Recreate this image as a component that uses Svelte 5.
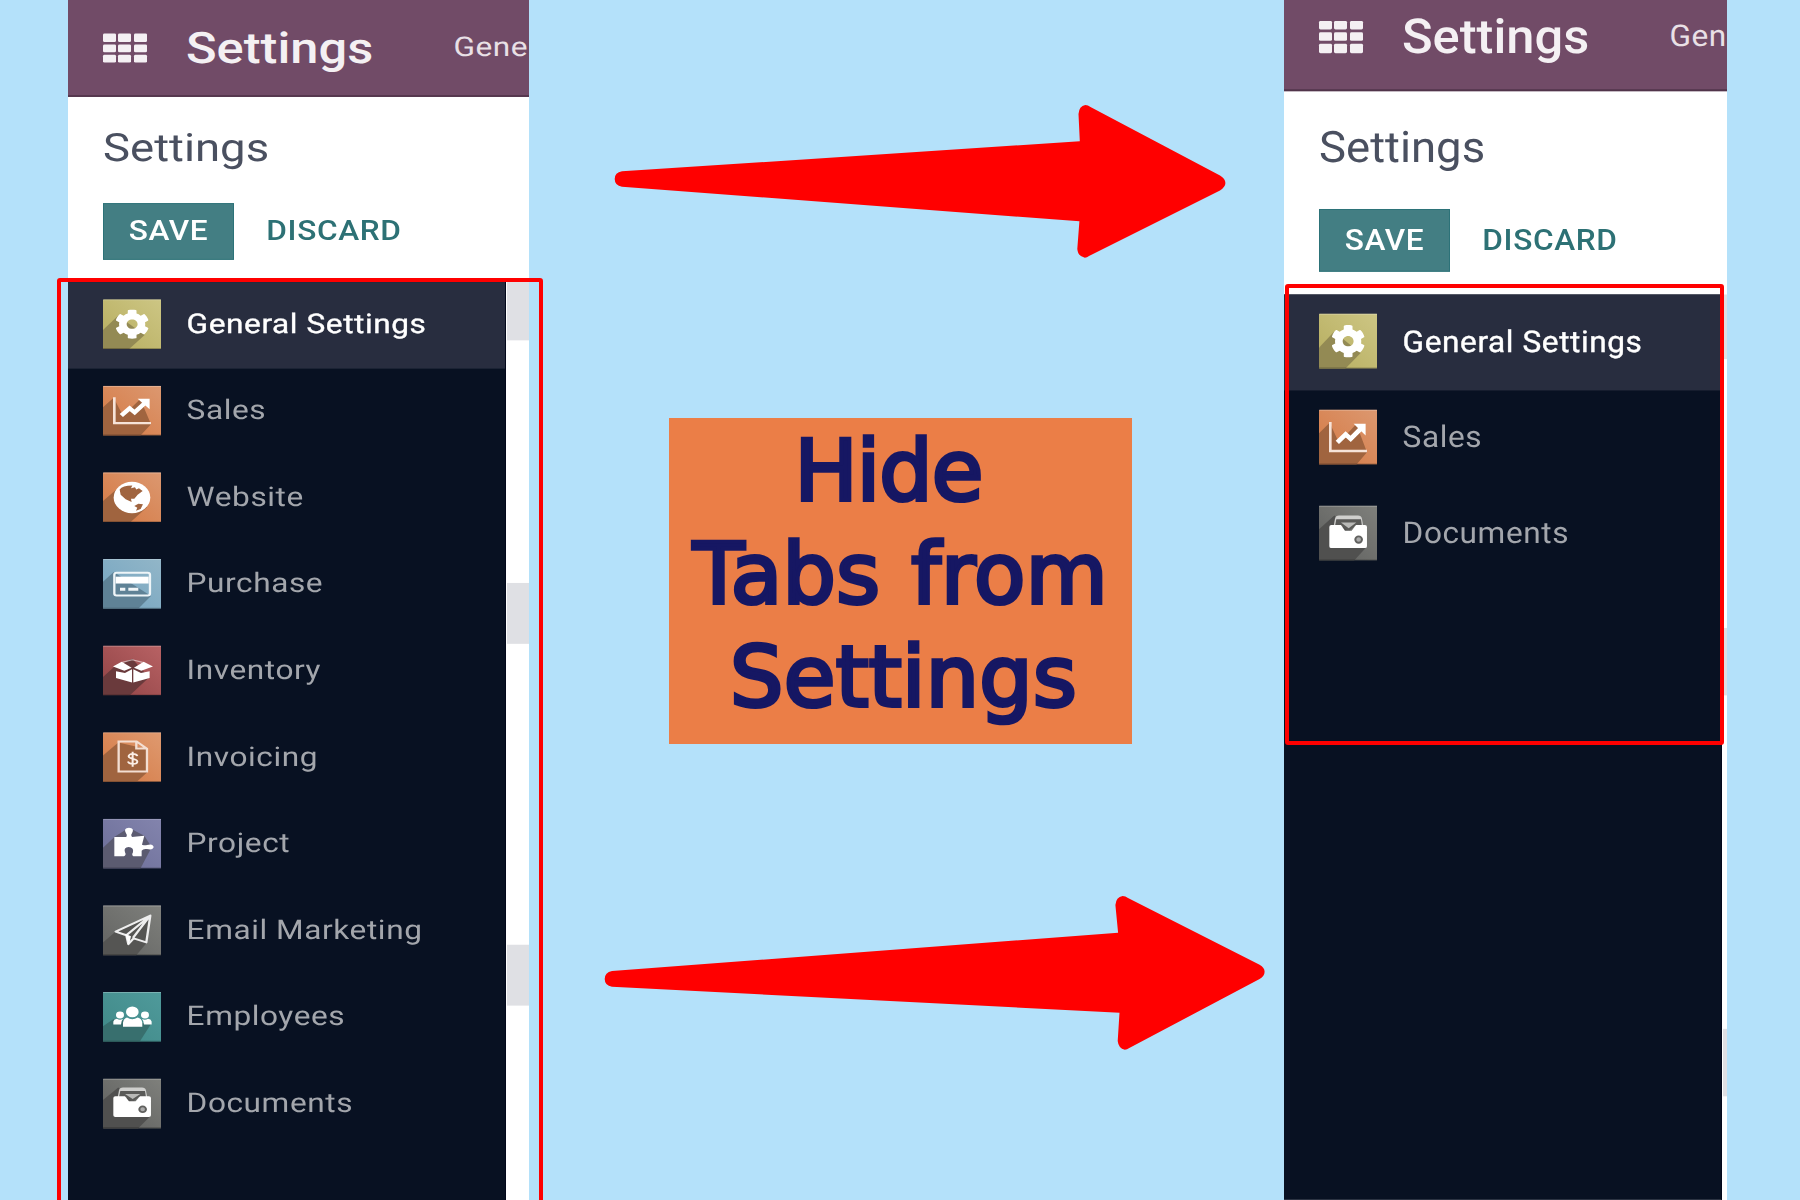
<script lang="ts">
  type Tab = { label: string; icon: string; active?: boolean };

  const before: Tab[] = [
    { label: 'General Settings', icon: 'gear', active: true },
    { label: 'Sales', icon: 'chart' },
    { label: 'Website', icon: 'globe' },
    { label: 'Purchase', icon: 'card' },
    { label: 'Inventory', icon: 'box' },
    { label: 'Invoicing', icon: 'invoice' },
    { label: 'Project', icon: 'puzzle' },
    { label: 'Email Marketing', icon: 'plane' },
    { label: 'Employees', icon: 'people' },
    { label: 'Documents', icon: 'drawer' },
  ];
  const after: Tab[] = [before[0], before[1], before[9]];

  const panels = [
    { side: 'left', tabs: before, entry: 'Gene' },
    { side: 'right', tabs: after, entry: 'Gen' },
  ];

  // tile gradient start, gradient end, long-shadow colour, shadow outline
  const tiles: Record<string, string[]> = {
    gear: ['#bbb266', '#cdc684', '#938a54', '0,108 45,58 125,125 78,175 0,175'],
    chart: ['#d67f4c', '#dc9870', '#a0643f', '0,75 32,42 60,105 112,46 144,135 112,175 0,175'],
    globe: ['#d67f4c', '#dc9870', '#a0643f', '0,100 40,60 132,122 82,175 0,175'],
    card: ['#7aa8c2', '#92b6c8', '#5f8296', '0,80 32,46 144,130 105,175 0,175'],
    box: ['#98494b', '#b86264', '#6a3a3c', '0,110 34,74 88,46 138,112 80,175 0,175'],
    invoice: ['#d67f4c', '#df9a70', '#a0643f', '0,82 46,36 134,60 134,140 100,175 0,175'],
    puzzle: ['#70729c', '#8384ad', '#5b5b70', '0,102 36,62 78,32 124,60 146,100 112,175 0,175'],
    plane: ['#686967', '#7f807c', '#555553', '0,130 38,92 142,36 132,130 100,175 0,175'],
    people: ['#438c8b', '#4f9a9b', '#386f6e', '0,120 32,95 144,112 110,175 0,175'],
    drawer: ['#646563', '#7f807c', '#50504f', '0,75 46,32 144,130 105,175 0,175'],
  };
</script>

<main class="stage">
  {#each panels as panel}
    <section class="panel {panel.side}">
      <div class="sheet">
        <header class="navbar">
          <div class="apps">{#each Array(9) as _}<i></i>{/each}</div>
          <strong class="brand">Settings</strong>
          <span class="entry">{panel.entry}</span>
        </header>
        <div class="control">
          <h1>Settings</h1>
          <div class="actions">
            <button class="save">SAVE</button>
            <button class="discard">DISCARD</button>
          </div>
        </div>
        <div class="body">
          <nav>
            {#each panel.tabs as tab}
              {@const t = tiles[tab.icon]}
              {@const gid = `${panel.side}-${tab.icon}`}
              <div class="tab" class:active={tab.active}>
                <svg class="tile" viewBox="0 0 175 175" fill="#fff">
                  <defs>
                    <linearGradient id={gid} x1="0" y1="1" x2="1" y2="0">
                      <stop offset="0.2" stop-color={t[0]} /><stop offset="1" stop-color={t[1]} />
                    </linearGradient>
                  </defs>
                  <rect width="175" height="175" rx="3" fill="url(#{gid})" />
                  <polygon points={t[3]} fill={t[2]} />
                  <path d="M0 2H175" stroke="#fff" stroke-opacity=".25" stroke-width="4" />
                  <path d="M0 173H175" stroke="#000" stroke-opacity=".25" stroke-width="4" />
                  {#if tab.icon === 'gear'}
                    <path transform="translate(35 35) scale(.205)" d="M487.4 315.7l-42.6-24.6c4.3-23.2 4.3-47 0-70.2l42.6-24.6c4.9-2.8 7.1-8.6 5.5-14-11.1-35.6-30-67.8-54.7-94.6-3.8-4.1-10-5.1-14.8-2.3L380.8 110c-17.9-15.4-38.5-27.3-60.8-35.1V25.8c0-5.6-3.9-10.5-9.4-11.7-36.7-8.2-74.3-7.8-109.2 0-5.5 1.2-9.4 6.1-9.4 11.7V75c-22.2 7.9-42.8 19.8-60.8 35.1L88.7 85.5c-4.9-2.8-11-1.9-14.8 2.3-24.7 26.7-43.6 58.9-54.7 94.6-1.7 5.4.6 11.2 5.5 14L67.3 221c-4.3 23.2-4.3 47 0 70.2l-42.6 24.6c-4.9 2.8-7.1 8.6-5.5 14 11.1 35.6 30 67.8 54.7 94.6 3.8 4.1 10 5.1 14.8 2.3l42.6-24.6c17.9 15.4 38.5 27.3 60.8 35.1v49.2c0 5.6 3.9 10.5 9.4 11.7 36.7 8.2 74.3 7.8 109.2 0 5.5-1.2 9.4-6.1 9.4-11.7v-49.2c22.2-7.9 42.8-19.8 60.8-35.1l42.6 24.6c4.9 2.8 11 1.9 14.8-2.3 24.7-26.7 43.6-58.9 54.7-94.6 1.5-5.5-.7-11.3-5.6-14.1zM256 336c-44.1 0-80-35.9-80-80s35.9-80 80-80 80 35.9 80 80-35.9 80-80 80z" />
                  {:else if tab.icon === 'chart'}
                    <path d="M34 40V131H144" fill="none" stroke="#f6e3d8" stroke-width="8" />
                    <path d="M55 104L80 79L95 93L127 59" fill="none" stroke="#fff" stroke-width="14" />
                    <path d="M104 45H140V82Z" />
                  {:else if tab.icon === 'globe'}
                    <circle cx="87" cy="88" r="55" />
                    <g fill={t[2]}>
                      <path d="M50 60Q58 46 88 46L84 56L96 52L100 60L108 56L119 65L104 78L94 92L84 92L86 104L68 94L53 78Z" />
                      <path d="M94 118L106 110L120 112L113 128L99 134L103 124Z" />
                    </g>
                  {:else if tab.icon === 'card'}
                    <rect x="34" y="48" width="107" height="80" rx="7" fill="none" stroke="#eef5f8" stroke-width="7" />
                    <rect x="38" y="62" width="99" height="24" />
                    <path d="M51 106H67M76 106H106" stroke="#f1f6f8" stroke-width="10" />
                  {:else if tab.icon === 'box'}
                    <path d="M58 59L88 50L119 59" fill="none" stroke="#fff" stroke-opacity=".55" stroke-width="4" />
                    <path d="M30 73L56 57L86 78L64 88ZM150 73L122 57L93 78L115 88Z" />
                    <path d="M39 90L66 96L87 83V129L39 114ZM140 90L114 96L91 83V129L140 114Z" />
                  {:else if tab.icon === 'invoice'}
                    <path d="M47 33H101L132 58V138H47ZM100 33V57H132" fill="none" stroke="#f3ded2" stroke-width="7" />
                    <path d="M103 84C100 73 76 74 77 85C78 96 103 91 103 103C103 114 78 114 75 103M89 69V121" fill="none" stroke="#fbeee6" stroke-width="6" />
                  {:else if tab.icon === 'puzzle'}
                    <path d="M34 64H70Q74 57 69 51Q60 33 78 32Q96 33 87 51Q82 57 87 64L124 60L117 91Q126 94 132 92Q150 86 152 99Q150 111 132 106Q120 104 116 112V131H91Q85 126 90 117Q93 101 77 99Q61 101 66 117Q71 126 63 131H34Z" />
                  {:else if tab.icon === 'plane'}
                    <path d="M142 36L38 92L70 105L76 136L92 116L130 130ZM70 105L140 38L90 114" fill="none" stroke="#eee" stroke-width="7" stroke-linejoin="round" />
                    <path d="M66 100L84 108L78 138Z" />
                  {:else if tab.icon === 'people'}
                    <circle cx="88" cy="70" r="19" /><circle cx="51" cy="81" r="12" /><circle cx="126" cy="81" r="12" />
                    <path d="M60 122V108Q62 94 72 90Q88 101 104 90Q116 94 118 108V122ZM31 114V104Q33 95 42 94Q50 100 60 95Q54 102 54 114ZM146 114V104Q144 95 135 94Q127 100 117 95Q123 102 123 114Z" />
                  {:else}
                    <path d="M44 66L48 42Q50 32 60 32H117Q127 32 129 42L133 66Z" fill="#cfcfcd" />
                    <path d="M52 44H126L129 66H107L88 82L70 66H48Z" fill="#5a5a58" />
                    <path d="M66 54H112L89 72Z" fill="#b9b9b7" />
                    <path d="M31 68Q31 62 37 62H66L78 80H98L111 62H138Q144 62 144 68V129Q144 135 138 135H37Q31 135 31 129Z" />
                    <circle cx="119" cy="108" r="10" fill="#aaa" stroke="#60605e" stroke-width="6" />
                  {/if}
                </svg>
                <span>{tab.label}</span>
              </div>
            {/each}
          </nav>
          <div class="content"><b></b><b></b><b></b></div>
        </div>
      </div>
    </section>
  {/each}

  <div class="caption">
    <p class="hide">Hide</p>
    <p class="tabs">Tabs from</p>
    <p class="settings">Settings</p>
  </div>

  <svg class="marks" viewBox="0 0 1800 1200">
    <g fill="#f00">
      <path d="M622 171.3L1079.8 141.3L1078.5 114Q1079 106 1085.3 105Q1088 105 1090.5 107L1220 175.6Q1225.4 179 1225.4 183Q1225.4 187 1220 190.4L1089 256Q1087 257.7 1084.8 257.7Q1078 256.5 1077.3 249L1079.4 221.3L622 186.7Q614.7 185.5 614.7 179Q614.7 172.5 622 171.3Z" />
      <path d="M612 971L1118.1 932.7L1115.4 905Q1116 897 1122.6 896Q1125.5 896 1128 898L1259.6 964.7Q1264.6 967.5 1264.6 971.8Q1264.6 976 1259.6 979L1129.3 1048Q1127 1049.7 1124.8 1049.7Q1118.5 1048.5 1117.7 1041L1119.5 1012.7L612 986.7Q604.7 985.5 604.7 979Q604.7 972.5 612 971Z" />
    </g>
    <g fill="none" stroke="#f00" stroke-width="4">
      <rect x="59" y="280" width="482" height="960" rx="1" />
      <rect x="1287" y="286" width="435" height="457" rx="1" />
    </g>
  </svg>
</main>

<style>
  :global(body) { margin: 0; background: #b4e1fa; }
  * { box-sizing: border-box; }
  .stage {
    position: relative;
    width: 1800px;
    height: 1200px;
    overflow: hidden;
    display: grid;
    grid-template-columns: 68px 461px 140px 463px 152px 443px 73px;
    background: #b4e1fa;
    font-family: Roboto, "Liberation Sans", sans-serif;
    text-rendering: geometricPrecision;
  }
  .panel { grid-row: 1; height: 1200px; overflow: hidden; background: #fff; }
  .left { grid-column: 2; --squash: 0.8573; --bar: 113.2px; --control: 215.4px; }
  .right { grid-column: 6; --squash: 0.95; --bar: 95.6px; --control: 214px; }
  .sheet {
    display: flex;
    flex-direction: column;
    height: calc(1200px / var(--squash));
    transform: scaleY(var(--squash));
    transform-origin: 0 0;
  }
  .navbar {
    display: flex;
    align-items: flex-end;
    flex: none;
    height: var(--bar);
    padding-left: 34.5px;
    background: #714b67;
    border-bottom: 2.2px solid #51344a;
    color: #f4f0f3;
    white-space: nowrap;
    overflow: hidden;
  }
  .apps {
    display: grid;
    flex: none;
    grid-template-columns: repeat(3, 13px);
    grid-auto-rows: 9.4px;
    gap: 2.9px 2.6px;
    width: 44.2px;
    margin-bottom: 38px;
  }
  .apps i { background: #f4f0f3; border-radius: 1.5px; }
  .brand { width: 267.5px; flex: none; margin-left: 39.3px; margin-bottom: 26px; font-size: 50.6px; line-height: 56px; font-weight: 500; }
  .entry { margin-bottom: 36px; font-size: 31.6px; line-height: 40px; letter-spacing: 0.5px; color: #e9e0e6; }
  .control { flex: none; height: var(--control); padding: 37px 0 0 35px; }
  h1 { margin: 0; font-size: 45.5px; line-height: 48px; font-weight: 400; color: #4a5060; }
  .actions { display: flex; align-items: center; margin-top: 39px; }
  button { border: 0; background: none; padding: 0; font: 500 31.6px/40px Roboto, sans-serif; letter-spacing: 0.65px; }
  .save { width: 131px; height: 66px; background: #437e83; border: 1.5px solid #2c7278; color: #fff; }
  .discard { margin-left: 32.3px; color: #2d7175; }
  .body { display: flex; flex: 1; min-height: 0; }
  nav { width: 438px; flex: none; background: #081122; border-right: 1px solid #02071a; }
  .tab { display: flex; align-items: flex-start; height: 101.1px; padding: 20px 0 0 35px; color: #a3a6ac; }
  .active { background: #282d3f; color: #fff; }
  .tile { width: 58.3px; height: 58.3px; flex: none; }
  .tab span { margin: 9px 0 0 25.3px; font-size: 31.6px; line-height: 40px; letter-spacing: 0.58px; white-space: nowrap; }
  .active span { -webkit-text-stroke: 0.4px #fff; }
  .right .tab span { margin-top: 10px; }
  .content { flex: 1; background: #fff; padding-left: 1px; }
  .content b { display: block; height: 71px; background: #dfe0e4; }
  .content b:first-child { height: 68.5px; }
  .content b:nth-child(2) { margin-top: 282.5px; }
  .content b:nth-child(3) { margin-top: 351px; }
  .caption {
    grid-row: 1;
    grid-column: 4;
    height: 326px;
    margin-top: 418px;
    padding-top: 2px;
    background: #eb7e47;
    color: #161763;
    font: 84px/103px "DejaVu Sans", sans-serif;
    -webkit-text-stroke: 3.8px #161763;
    text-align: center;
    white-space: nowrap;
  }
  .caption p { margin: 0; }
  .hide { padding-right: 24px; letter-spacing: -0.9px; }
  .tabs { letter-spacing: 0.3px; word-spacing: 4px; }
  .settings { padding-left: 6px; letter-spacing: 0.3px; }
  .marks { position: absolute; inset: 0; width: 1800px; height: 1200px; }
</style>
